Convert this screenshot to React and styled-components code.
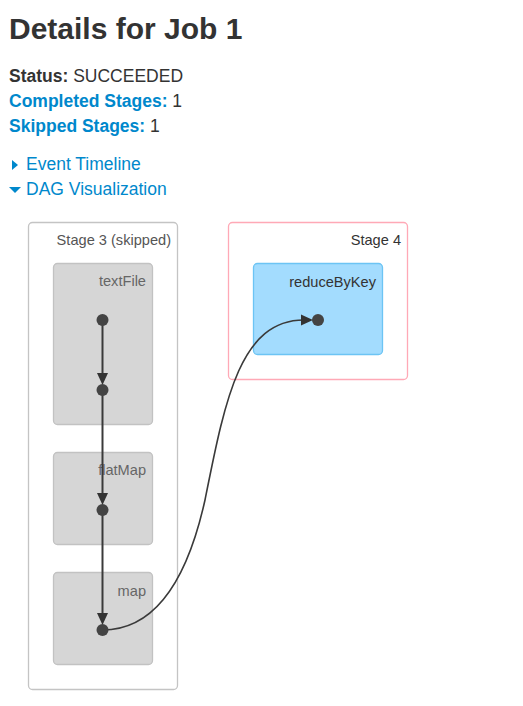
import React from "react"
import styled, { createGlobalStyle } from "styled-components"

const GlobalStyle = createGlobalStyle`
    html, body {
        margin: 0;
        padding: 0;
        background: #ffffff;
    }
    body {
        font-family: "Liberation Sans", Arial, Helvetica, sans-serif;
        font-size: 17.5px;
        line-height: 25px;
        color: #333333;
    }
`

const Page = styled.div`
    padding: 11.6px 9px 0 9px;
`

const Title = styled.h3`
    margin: 0 0 19px 0;
    font-size: 30px;
    line-height: 33px;
    font-weight: bold;
    color: #333333;
`

const Summary = styled.ul`
    list-style: none;
    margin: 0 0 13.7px 0;
    padding: 0;
`

const Item = styled.li`
    margin: 0;
`

const Label = styled.strong`
    color: ${(props) => (props.$link ? "#0088cc" : "#333333")};
`

const Toggle = styled.div`
    display: flex;
    align-items: center;
    color: #0088cc;
    cursor: pointer;
`

const Arrow = styled.span`
    display: inline-block;
    width: 0;
    height: 0;
    margin-right: ${(props) => (props.$open ? "5px" : "8px")};
    margin-left: ${(props) => (props.$open ? "0" : "3px")};
    border-style: solid;
    border-color: transparent;
    ${(props) =>
        props.$open
            ? "border-width: 6px 6px 0 6px; border-top-color: #0088cc;"
            : "border-width: 5.5px 0 5.5px 6px; border-left-color: #0088cc;"}
`

const Dag = styled.svg`
    display: block;
    margin-left: -9px;
    margin-top: -2.3px;
    font-family: "Liberation Sans", Arial, Helvetica, sans-serif;
`

const Cluster = styled.rect`
    fill: ${(props) => props.$fill};
    stroke: ${(props) => props.$stroke};
    stroke-width: 1.3px;
`

const BoxLabel = styled.text`
    font-size: 14.6px;
    fill: ${(props) => props.$color || "#333333"};
    text-anchor: end;
`

const Edge = styled.path`
    fill: none;
    stroke: #3a3a3a;
    stroke-width: ${(props) => props.$width || 2}px;
`

const Node = styled.circle`
    fill: #444444;
`

const Head = styled.polygon`
    fill: #333333;
`

const stageColors = {
    skipped: { fill: "#ffffff", stroke: "#c4c4c4" },
    done: { fill: "#ffffff", stroke: "#ffa9b6" },
    skippedOp: { fill: "#d6d6d6", stroke: "#c2c2c2" },
    doneOp: { fill: "#a3dcfe", stroke: "#6cc4f4" },
}

const boxes = [
    { x: 28.5, y: 222.5, w: 149, h: 467, kind: "skipped", label: "Stage 3 (skipped)", lx: 171, ly: 245, color: "#555555" },
    { x: 228.5, y: 222.5, w: 179, h: 157, kind: "done", label: "Stage 4", lx: 401, ly: 245, color: "#333333" },
    { x: 53.5, y: 263.5, w: 99, h: 161, kind: "skippedOp", label: "textFile", lx: 146, ly: 286, color: "#666666" },
    { x: 53.5, y: 452.5, w: 99, h: 92, kind: "skippedOp", label: "flatMap", lx: 146, ly: 475, color: "#666666" },
    { x: 53.5, y: 572.5, w: 99, h: 92, kind: "skippedOp", label: "map", lx: 146, ly: 596, color: "#666666" },
    { x: 253.5, y: 263.5, w: 129, h: 91, kind: "doneOp", label: "reduceByKey", lx: 376, ly: 287, color: "#333333" },
]

const nodes = [
    [102.5, 320],
    [102.5, 390],
    [102.5, 510],
    [102.5, 630],
    [318, 320],
]

const DagVisualization = () => (
    <Dag width="430" height="500" viewBox="0 200 430 500">
        {boxes.map((b) => (
            <g key={b.label}>
                <Cluster x={b.x} y={b.y} width={b.w} height={b.h} rx="4" ry="4" $fill={stageColors[b.kind].fill} $stroke={stageColors[b.kind].stroke} />
                <BoxLabel x={b.lx} y={b.ly} $color={b.color}>{b.label}</BoxLabel>
            </g>
        ))}
        <Edge d="M102.5,320 L102.5,376" />
        <Head points="97,373 108,373 102.5,385" />
        <Edge d="M102.5,390 L102.5,496" />
        <Head points="97,493 108,493 102.5,505" />
        <Edge d="M102.5,510 L102.5,616" />
        <Head points="97,613 108,613 102.5,625" />
        <Edge $width={1.6} d="M102.5,630 C150,630 185,590 205,500 C225,400 240,320 304,320" />
        <Head points="301,314.5 301,325.5 313,320" />
        {nodes.map(([cx, cy]) => (
            <Node key={cx + "-" + cy} cx={cx} cy={cy} r="6" />
        ))}
    </Dag>
)

const App = () => (
    <>
        <GlobalStyle />
        <Page>
            <Title>Details for Job 1</Title>
            <Summary>
                <Item><Label>Status:</Label> SUCCEEDED</Item>
                <Item><Label $link>Completed Stages:</Label> 1</Item>
                <Item><Label $link>Skipped Stages:</Label> 1</Item>
            </Summary>
            <Toggle><Arrow />Event Timeline</Toggle>
            <Toggle><Arrow $open />DAG Visualization</Toggle>
            <DagVisualization />
        </Page>
    </>
)

export default App
